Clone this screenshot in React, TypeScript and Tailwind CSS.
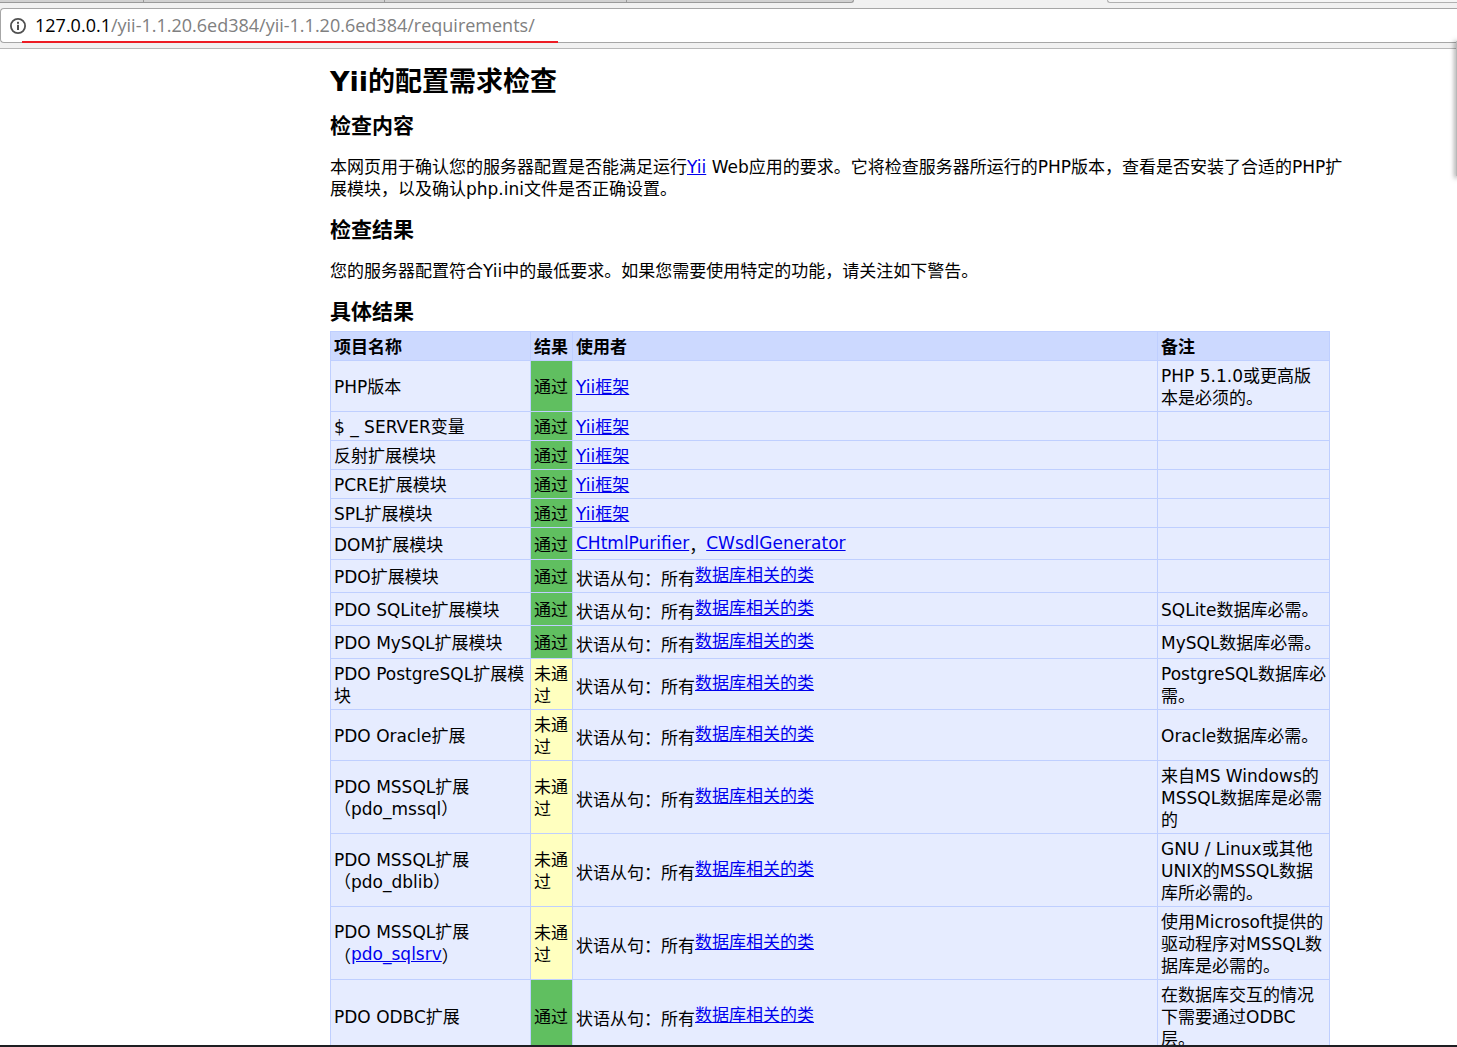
import React, { useState } from 'react';

type Row = {
  name: React.ReactNode;
  passed: boolean;
  usedBy: React.ReactNode;
  memo?: string;
};

const linkClass = 'text-[#0000ee] underline';

const yiiLink = <a href="#yii" className={linkClass}>Yii框架</a>;

const dbLink = (
  <>
    状语从句：所有
    <a href="#db" className="align-[4px] text-[#0000ee] underline">数据库相关的类</a>
  </>
);

const rows: Row[] = [
  { name: 'PHP版本', passed: true, usedBy: yiiLink, memo: 'PHP 5.1.0或更高版本是必须的。' },
  { name: '$ _ SERVER变量', passed: true, usedBy: yiiLink },
  { name: '反射扩展模块', passed: true, usedBy: yiiLink },
  { name: 'PCRE扩展模块', passed: true, usedBy: yiiLink },
  { name: 'SPL扩展模块', passed: true, usedBy: yiiLink },
  {
    name: 'DOM扩展模块',
    passed: true,
    usedBy: (
      <>
        <a href="#purifier" className="align-[3px] text-[#0000ee] underline">CHtmlPurifier</a>，
        <a href="#wsdl" className="align-[3px] text-[#0000ee] underline">CWsdlGenerator</a>
      </>
    ),
  },
  { name: 'PDO扩展模块', passed: true, usedBy: dbLink },
  { name: 'PDO SQLite扩展模块', passed: true, usedBy: dbLink, memo: 'SQLite数据库必需。' },
  { name: 'PDO MySQL扩展模块', passed: true, usedBy: dbLink, memo: 'MySQL数据库必需。' },
  { name: 'PDO PostgreSQL扩展模块', passed: false, usedBy: dbLink, memo: 'PostgreSQL数据库必需。' },
  { name: 'PDO Oracle扩展', passed: false, usedBy: dbLink, memo: 'Oracle数据库必需。' },
  { name: 'PDO MSSQL扩展（pdo_mssql）', passed: false, usedBy: dbLink, memo: '来自MS Windows的MSSQL数据库是必需的' },
  { name: 'PDO MSSQL扩展（pdo_dblib）', passed: false, usedBy: dbLink, memo: 'GNU / Linux或其他UNIX的MSSQL数据库所必需的。' },
  {
    name: (
      <>
        PDO MSSQL扩展（<a href="#sqlsrv" className="align-[3px] text-[#0000ee] underline">pdo_sqlsrv</a>）
      </>
    ),
    passed: false,
    usedBy: dbLink,
    memo: '使用Microsoft提供的驱动程序对MSSQL数据库是必需的。',
  },
  { name: 'PDO ODBC扩展', passed: true, usedBy: dbLink, memo: '在数据库交互的情况下需要通过ODBC层。' },
];

const cell = 'border border-[#bfcfff] pt-[4px] pb-[2px] pl-[3px] pr-[2px] text-left align-middle';

function BrowserBar() {
  const [path, setPath] = useState('/yii-1.1.20.6ed384/yii-1.1.20.6ed384/requirements/');

  return (
    <header className="relative shrink-0 border-b border-[#b8b8b8] bg-[#f1f1f1]">
      {/* bottom edge of the tab strip */}
      <div className="flex h-[3px]">
        <div className="w-[144px] border-r border-b border-[#999] bg-[#d1d1d1]" />
        <div className="w-[241px] border-r border-b border-[#999] bg-[#d1d1d1]" />
        <div className="w-[242px] border-r border-b border-[#999] bg-[#d1d1d1]" />
        <div className="w-[227px] rounded-br-sm border-r border-b border-[#999] bg-[#d1d1d1]" />
        <div className="w-[253px]" />
        <div className="flex-1 rounded-bl-sm border-b border-l border-[#b0b0b0] bg-[#f5f5f5]" />
      </div>

      <div className="mt-[5px] mb-[5px] flex h-[35px] items-center rounded-l-sm border border-r-0 border-[#a6a6a6] bg-white pl-2 font-['Open_Sans','Noto_Sans',sans-serif] text-[18px]">
        <svg viewBox="0 0 18 18" className="mr-2 h-[18px] w-[18px] shrink-0" fill="none">
          <circle cx="9" cy="9" r="7.1" stroke="#505050" strokeWidth="1.8" />
          <rect x="8" y="7.8" width="2" height="5.2" fill="#505050" />
          <rect x="8" y="4.8" width="2" height="2" fill="#505050" />
        </svg>
        <label htmlFor="url" className="pb-px text-black">127.0.0.1</label>
        <input
          id="url"
          type="text"
          value={path}
          onChange={(e) => setPath(e.target.value)}
          className="min-w-0 flex-1 bg-transparent pb-px text-[#808080] outline-none"
        />
      </div>

      {/* red marker line under the address */}
      <div className="absolute bottom-[5px] left-[22px] h-[2px] w-[536px] bg-[#ed1c24]" />
    </header>
  );
}

export default function App() {
  return (
    <div
      lang="zh-CN"
      className="relative flex h-screen flex-col overflow-hidden bg-white font-['DejaVu_Sans','Noto_Sans_CJK_SC',sans-serif] text-[17px] leading-[22px] text-black"
    >
      <BrowserBar />

      <main className="min-h-0 flex-1 overflow-hidden pt-4 pl-[330px]">
        <div className="max-w-[1000px]">
          <h1 className="mb-[13px] text-[27px] leading-[34px] font-bold">Yii的配置需求检查</h1>

          <h2 className="mb-4 text-[21px] leading-[28px] font-bold">检查内容</h2>
          <p className="-mr-4 mb-4">
            本网页用于确认您的服务器配置是否能满足运行<a href="#yii" className={linkClass}>Yii</a> Web应用的要求。它将检查服务器所运行的PHP版本，查看是否安装了合适的PHP扩展模块，以及确认php.ini文件是否正确设置。
          </p>

          <h2 className="mb-4 text-[21px] leading-[28px] font-bold">检查结果</h2>
          <p className="mb-4">您的服务器配置符合Yii中的最低要求。如果您需要使用特定的功能，请关注如下警告。</p>

          <h2 className="mb-[5px] text-[21px] leading-[28px] font-bold">具体结果</h2>
          <table className="w-full table-fixed border-collapse bg-[#e6ecff]">
            <colgroup>
              <col className="w-[200px]" />
              <col className="w-[42px]" />
              <col />
              <col className="w-[172px]" />
            </colgroup>
            <thead>
              <tr className="bg-[#ccd9ff]">
                <th className={cell}>项目名称</th>
                <th className={cell}>结果</th>
                <th className={cell}>使用者</th>
                <th className={cell}>备注</th>
              </tr>
            </thead>
            <tbody>
              {rows.map((row, idx) => (
                <tr key={idx}>
                  <td className={cell}>{row.name}</td>
                  <td className={`${cell} ${row.passed ? 'bg-[#60bf60]' : 'bg-[#ffffbf]'}`}>
                    {row.passed ? '通过' : '未通过'}
                  </td>
                  <td className={cell}>{row.usedBy}</td>
                  <td className={cell}>{row.memo}</td>
                </tr>
              ))}
            </tbody>
          </table>
        </div>
      </main>

      <footer className="h-[2px] shrink-0 bg-[#1e1e22]" />

      {/* edge of the popup on the right */}
      <div className="absolute top-[41px] right-0 h-[135px] w-px bg-[#b8b8b8] shadow-[0_1px_5px_1px_rgba(0,0,0,0.5)]" />
    </div>
  );
}
